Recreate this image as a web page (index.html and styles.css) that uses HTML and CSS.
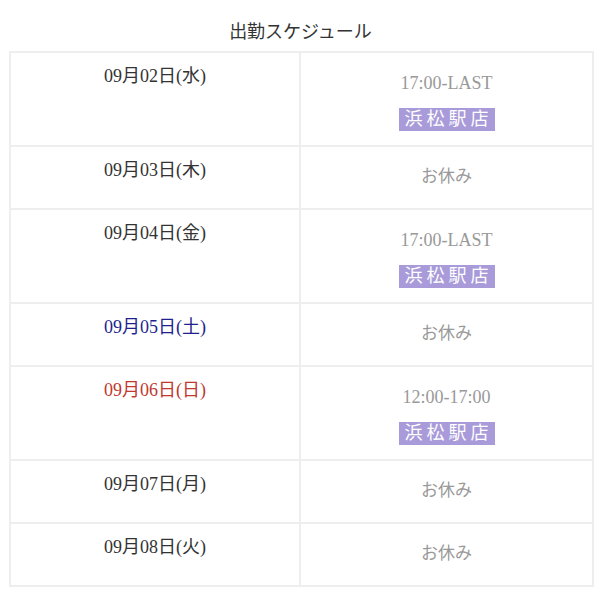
FILE: index.html
```html
<!DOCTYPE html>
<html lang="ja">
<head>
<meta charset="utf-8">
<link rel="stylesheet" href="styles.css">
</head>
<body>
<div class="wrap">
  <h2 class="title">出勤スケジュール</h2>
  <div class="table">
    <div class="row">
      <div class="cell date">09月02日(水)</div>
      <div class="cell info"><div class="time">17:00-LAST</div><span class="shop">浜松駅店</span></div>
    </div>
    <div class="row">
      <div class="cell date">09月03日(木)</div>
      <div class="cell info"><div class="time off">お休み</div></div>
    </div>
    <div class="row">
      <div class="cell date">09月04日(金)</div>
      <div class="cell info"><div class="time">17:00-LAST</div><span class="shop">浜松駅店</span></div>
    </div>
    <div class="row">
      <div class="cell date sat">09月05日(土)</div>
      <div class="cell info"><div class="time off">お休み</div></div>
    </div>
    <div class="row">
      <div class="cell date sun">09月06日(日)</div>
      <div class="cell info"><div class="time">12:00-17:00</div><span class="shop">浜松駅店</span></div>
    </div>
    <div class="row">
      <div class="cell date">09月07日(月)</div>
      <div class="cell info"><div class="time off">お休み</div></div>
    </div>
    <div class="row">
      <div class="cell date">09月08日(火)</div>
      <div class="cell info"><div class="time off">お休み</div></div>
    </div>
  </div>
</div>
</body>
</html>
```

FILE: styles.css
```css
html, body {
  margin: 0;
  padding: 0;
  background: #fff;
}
body {
  font-family: "Liberation Serif", "Noto Sans CJK JP", serif;
  color: #333;
}
.wrap {
  padding: 20px 8px 0 9px;
}
.title {
  margin: 0 0 7px;
  text-align: center;
  font-weight: normal;
  font-size: 18px;
  line-height: 24px;
  color: #333;
}
.table {
  border-top: 2px solid #eee;
  border-left: 2px solid #eee;
  width: 583px;
}
.row {
  display: grid;
  grid-template-columns: 290px 1fr;
}
.cell {
  border-right: 2px solid #eee;
  border-bottom: 2px solid #eee;
  text-align: center;
}
.date {
  padding-top: 12px;
  font-size: 18px;
  line-height: 22px;
  color: #333;
}
.date.sat { color: #1f1f8f; }
.date.sun { color: #c0392f; }
.info {
  padding: 19px 0 14px;
  display: flex;
  flex-direction: column;
  align-items: center;
  gap: 14px;
}
.time {
  font-size: 18px;
  line-height: 22px;
  color: #999;
}
.time.off {
  font-size: 17px;
  padding-bottom: 6px;
}
.shop {
  display: inline-block;
  background: #a99bd9;
  color: #fff;
  font-size: 18px;
  line-height: 23px;
  padding: 0 2px 0 6px;
  letter-spacing: 4px;
}
```
